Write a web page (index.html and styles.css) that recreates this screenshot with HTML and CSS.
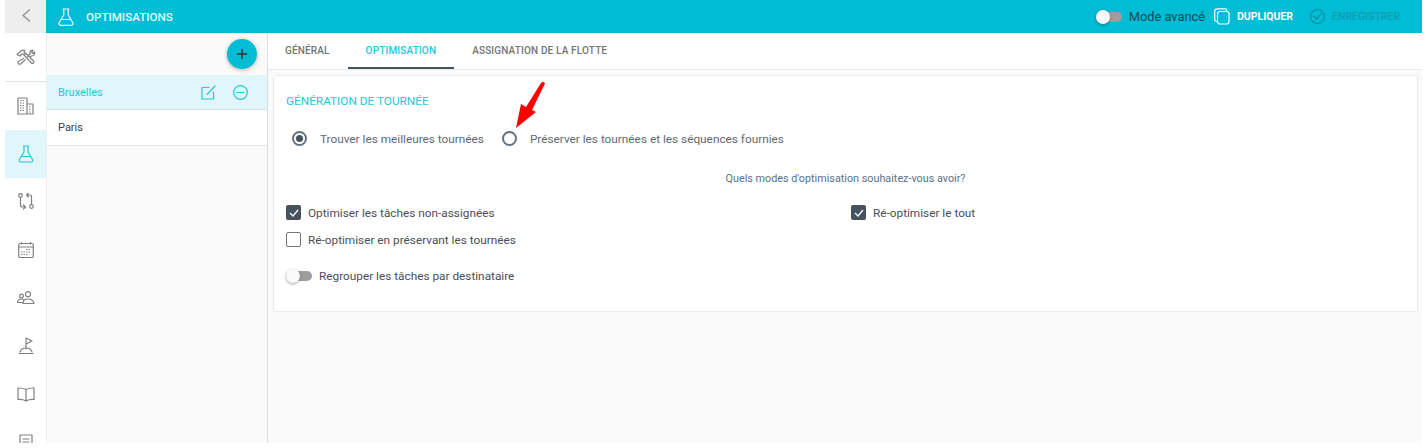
FILE: index.html
```html
<!DOCTYPE html>
<html lang="fr">
<head>
  <meta charset="UTF-8">
  <title>Optimisations</title>
  <link rel="stylesheet" href="styles.css">
</head>
<body>
  <div class="app">
    <header class="topbar">
      <button class="back-button">
        <svg width="10" height="13" viewBox="0 0 10 13"><path d="M8.500 1 2 6.500 8.500 12" class="line"/></svg>
      </button>
      <div class="title">
        <svg width="16" height="18" viewBox="0 0 16 18"><path d="M5 1h6M5.800 1v6L1 15Q.4 17.300 3 17.300h10q2.600 0 2-2.300L10.200 7V1M3.500 11.500h9" class="line"/></svg>
        <span>OPTIMISATIONS</span>
      </div>
      <div class="actions">
        <span class="switch on-teal"><i></i></span>
        <span class="mode-label">Mode avancé</span>
        <svg class="copy-icon" width="16" height="17" viewBox="0 0 16 17"><path d="M2.500 13.500Q.7 13 .7 11V3Q.7.800 3 .8h8q1.500 0 2 1.500" class="line"/><rect x="3.500" y="3.500" width="11.500" height="12.500" rx="2.500" class="line"/></svg>
        <span class="action-label">DUPLIQUER</span>
        <svg class="check-icon" width="15" height="15" viewBox="0 0 15 15"><circle cx="7.500" cy="7.500" r="7" class="line"/><path d="m4 7.500 2.500 2.500L11 5" class="line"/></svg>
        <span class="action-label disabled">ENREGISTRER</span>
      </div>
    </header>

    <div class="body-row">
      <nav class="sidebar">
        <a class="nav-item first">
          <svg width="20" height="16" viewBox="0 0 20 16"><path d="M1 5.500 5 2q2-1.500 4-.5L8 3l1.500 1.500L8 6 6.500 4.700 4 7 1 5.500ZM8 6l7.500 8q1 .8 2 0 .8-1 0-2L10 4.500M11.500 7.500 14 5q-.8-3 2-4l1 .3-1.500 2 1.500 1.200L18.500 3q.8 3.500-3 4L14 8.500M7.500 9.500 2.500 12.500q-1.200 1.200 0 2.300 1.200.9 2.300 0l4.500-4" class="line"/></svg>
        </a>
        <a class="nav-item">
          <svg width="17" height="18" viewBox="0 0 17 18"><path d="M1 17V1h9v16M10 7h6v10H1" class="line"/><path d="M3 3.500h5M3 6h5M3 8.500h5M3 11h5M3 13.500h5M12 10h2.500M12 12.500h2.500M12 15h2.500" class="line dotted"/></svg>
        </a>
        <a class="nav-item active">
          <svg width="16" height="18" viewBox="0 0 16 18"><path d="M5.500 1h5M6 1v6L1.300 14.800Q.6 17 3 17h10q2.400 0 1.700-2.200L10 7V1M3.500 11.500h9" class="line"/></svg>
        </a>
        <a class="nav-item">
          <svg width="16" height="18" viewBox="0 0 16 18"><circle cx="2.500" cy="2.500" r="1.800" class="line"/><circle cx="13.500" cy="13.500" r="1.800" class="line"/><path d="M2.500 4.500V12q0 2 2 2H7M5.500 12 7.500 14l-2 2M13.500 11.500V4q0-2-2-2H9M10.500 0 8.500 2l2 2" class="line"/></svg>
        </a>
        <a class="nav-item">
          <svg width="16" height="16" viewBox="0 0 16 16"><rect x=".7" y="1.500" width="14.600" height="14" rx="1.500" class="line"/><path d="M.7 5h14.600M3.500 0v2M12.500 0v2" class="line"/><path d="M8 7.500h5M3 10h10M3 12.500h7" class="line dotted"/></svg>
        </a>
        <a class="nav-item">
          <svg width="18" height="14" viewBox="0 0 18 14"><circle cx="4.500" cy="5" r="1.900" class="line"/><circle cx="11" cy="3.200" r="2.500" class="line"/><path d="M.5 11q.5-3 4-3 1.500 0 2.500 1M.5 11.500H6M6 12.500q0-4.500 5-4.500t6 4.500Z" class="line"/></svg>
        </a>
        <a class="nav-item">
          <svg width="16" height="18" viewBox="0 0 16 18"><path d="M8 12V1l6 3-6 3M1 16.500h14M2 15q1-4 6-4t6 4" class="line"/></svg>
        </a>
        <a class="nav-item">
          <svg width="18" height="15" viewBox="0 0 18 15"><path d="M9 2.500Q6 .8 1 1v11.500q5-.3 8 1.500 3-1.800 8-1.500V1q-5-.2-8 1.500Zm0 0V14" class="line"/></svg>
        </a>
        <a class="nav-item">
          <svg width="14" height="16" viewBox="0 0 14 16"><path d="M1 1h12v14H1ZM4 5h6M4 8h6" class="line"/></svg>
        </a>
      </nav>

      <aside class="list-panel">
        <div class="list-head">
          <button class="add-button">
            <svg width="12" height="12" viewBox="0 0 12 12"><path d="M6 1v10M1 6h10"/></svg>
          </button>
        </div>
        <div class="list-row selected">
          <span>Bruxelles</span>
          <svg class="edit-icon" width="15" height="15" viewBox="0 0 15 15"><path d="M8 2.500H1v11.500h11.500V7M6 9.500 14 1" class="line"/></svg>
          <svg class="remove-icon" width="15" height="15" viewBox="0 0 15 15"><circle cx="7.500" cy="7.500" r="6.800" class="line"/><path d="M4 7.500h7" class="line"/></svg>
        </div>
        <div class="list-row">
          <span>Paris</span>
        </div>
      </aside>

      <main class="content">
        <div class="tabs">
          <a class="tab">GÉNÉRAL</a>
          <a class="tab current">OPTIMISATION</a>
          <a class="tab">ASSIGNATION DE LA FLOTTE</a>
        </div>
        <section class="card">
          <h2>GÉNÉRATION DE TOURNÉE</h2>

          <div class="radio-row">
            <span class="radio checked"></span>
            <span class="radio-label">Trouver les meilleures tournées</span>
            <span class="radio"></span>
            <span class="radio-label">Préserver les tournées et les séquences fournies</span>
          </div>

          <p class="question">Quels modes d'optimisation souhaitez-vous avoir?</p>

          <div class="check-grid">
            <label class="check-item">
              <span class="box ticked"><svg width="10" height="8" viewBox="0 0 10 8"><path d="m1 4 3 3 5-6"/></svg></span>
              Optimiser les tâches non-assignées
            </label>
            <label class="check-item">
              <span class="box ticked"><svg width="10" height="8" viewBox="0 0 10 8"><path d="m1 4 3 3 5-6"/></svg></span>
              Ré-optimiser le tout
            </label>
            <label class="check-item">
              <span class="box"></span>
              Ré-optimiser en préservant les tournées
            </label>
          </div>

          <div class="toggle-row">
            <span class="switch"><i></i></span>
            Regrouper les tâches par destinataire
          </div>

          <svg class="arrow" width="34" height="50" viewBox="0 0 34 50"><path d="M27 3Q29.500 1 31 3.500L18 30l4 2L2 48l5-24 5 3Z"/></svg>
        </section>
      </main>
    </div>
  </div>
</body>
</html>
```

FILE: styles.css
```css
* {
  box-sizing: border-box;
}

html, body {
  margin: 0;
  height: 100%;
  overflow: hidden;
  background-color: #fff;
}

body {
  font-family: Roboto, sans-serif;
  font-size: 12px;
  color: #46525e;
}

.app {
  width: 1417px;
  height: 443px;
  margin-left: 5px;
  display: flex;
  flex-direction: column;
  overflow: hidden;
}

.line {
  fill: none;
  stroke: currentColor;
  stroke-width: 1.2;
  stroke-linecap: round;
  stroke-linejoin: round;
}

.dotted {
  stroke-width: 1;
  stroke-dasharray: 1.500 1;
  stroke-linecap: butt;
}

/* top bar */
.topbar {
  height: 33px;
  flex: none;
  display: flex;
  align-items: center;
  background-color: #00bcd4;
  color: #fff;
}

.back-button {
  width: 41px;
  height: 33px;
  padding: 0;
  border: none;
  background-color: #eee;
  color: #8a8a8a;
}

.title {
  display: flex;
  align-items: center;
  gap: 12px;
  margin-left: 12px;
  font-size: 11.6px;
  font-weight: 500;
  color: #e9fbfd;
}

.actions {
  margin-left: auto;
  display: flex;
  align-items: center;
  padding-right: 22px;
}

.mode-label {
  margin-left: 7px;
  font-size: 12.8px;
  color: #0d4a55;
}

.copy-icon {
  margin-left: 9px;
}

.check-icon {
  margin-left: 17px;
  color: #0f8fa3;
}

.action-label {
  margin-left: 7px;
  font-size: 10.500px;
  font-weight: 700;
}

.action-label.disabled {
  color: #0f9db1;
  font-weight: 500;
}

/* switches */
.switch {
  position: relative;
  display: inline-block;
  width: 26px;
  height: 10px;
  flex: none;
  border-radius: 5px;
  background-color: #9e9e9e;
}

.switch i {
  position: absolute;
  left: 0;
  top: -2px;
  width: 14px;
  height: 14px;
  border-radius: 50%;
  background-color: #fafafa;
  box-shadow: 0 1px 3px rgba(0, 0, 0, 0.35);
}

/* layout */
.body-row {
  flex: 1;
  display: flex;
  min-height: 0;
}

.sidebar {
  width: 41px;
  flex: none;
  background-color: #fff;
  color: #808080;
  overflow: hidden;
}

.nav-item {
  height: 48px;
  display: flex;
  align-items: center;
  justify-content: center;
}

.nav-item.first {
  border-bottom: 1px solid #e4e4e4;
  height: 49px;
}

.nav-item.active {
  background-color: #e1f6fb;
  color: #26c6da;
}

.list-panel {
  width: 222px;
  flex: none;
  background-color: #fafafa;
  border-left: 1px solid #eee;
  border-right: 1px solid #ddd;
}

.list-head {
  height: 42px;
  display: flex;
  justify-content: flex-end;
  align-items: flex-start;
  padding: 6px 10px 0 0;
}

.add-button {
  width: 30px;
  height: 30px;
  padding: 0;
  border: none;
  border-radius: 50%;
  background-color: #00bcd4;
  box-shadow: 0 1px 4px rgba(0, 0, 0, 0.3);
  display: flex;
  align-items: center;
  justify-content: center;
}

.add-button path {
  fill: none;
  stroke: #263238;
  stroke-width: 1.500;
}

.list-row {
  height: 36px;
  display: flex;
  align-items: center;
  padding-left: 11px;
  padding-right: 19px;
  background-color: #fff;
  border-bottom: 1px solid #e8e8e8;
  font-size: 11px;
  color: #424242;
}

.list-row.selected {
  height: 35px;
  background-color: #e1f6fb;
  color: #26c6da;
  border-bottom-color: #cfe4ea;
}

.edit-icon {
  margin-left: auto;
}

.remove-icon {
  margin-left: 17px;
}

/* main area */
.content {
  flex: 1;
  min-width: 0;
  background-color: #fafafa;
}

.tabs {
  height: 37px;
  display: flex;
  background-color: #fff;
  border-bottom: 1px solid #e8e8e8;
}

.tab {
  height: 36px;
  padding: 0 18px;
  display: flex;
  align-items: center;
  font-size: 10px;
  font-weight: 500;
  letter-spacing: 0.15px;
  color: #757575;
  border-bottom: 2px solid transparent;
}

.tab:first-child {
  padding-left: 17px;
}

.tab.current {
  color: #26c6da;
  border-bottom-color: #46525e;
}

.card {
  position: relative;
  height: 235px;
  margin: 6px 5px 0 6px;
  padding: 18px 12px 0;
  background-color: #fff;
  box-shadow: 0 0 2px rgba(0, 0, 0, 0.18);
}

h2 {
  margin: 0;
  font-size: 11.8px;
  line-height: 14px;
  font-weight: 400;
  color: #26c6da;
}

.radio-row {
  display: flex;
  align-items: center;
  margin-top: 23px;
  padding-left: 6px;
  font-size: 11.8px;
}

.radio {
  width: 15px;
  height: 15px;
  flex: none;
  border: 2px solid #66717b;
  border-radius: 50%;
  padding: 2px;
  background-clip: content-box;
}

.radio.checked {
  background-color: #46525e;
}

.radio-label {
  margin-left: 13px;
  margin-right: 18px;
  color: #5f6a74;
}

.question {
  margin: 26px 0 0;
  text-align: center;
  font-size: 10.8px;
  line-height: 13px;
  color: #5a7186;
}

.check-grid {
  display: grid;
  grid-template-columns: 565px 1fr;
  row-gap: 6px;
  margin-top: 17px;
  font-size: 11.8px;
  color: #4a4f55;
}

.check-item {
  display: flex;
  align-items: center;
  gap: 7px;
  height: 21px;
}

.box {
  width: 15px;
  height: 15px;
  flex: none;
  border: 1.500px solid #757575;
  border-radius: 2px;
  display: flex;
  align-items: center;
  justify-content: center;
}

.box.ticked {
  border: none;
  background-color: #46525e;
}

.box path {
  fill: none;
  stroke: #fff;
  stroke-width: 1.300;
}

.toggle-row {
  display: flex;
  align-items: center;
  gap: 7px;
  margin-top: 19px;
  font-size: 11.8px;
  color: #4a4f55;
}

.arrow {
  position: absolute;
  left: 240px;
  top: 4px;
  fill: #f00;
}
```
